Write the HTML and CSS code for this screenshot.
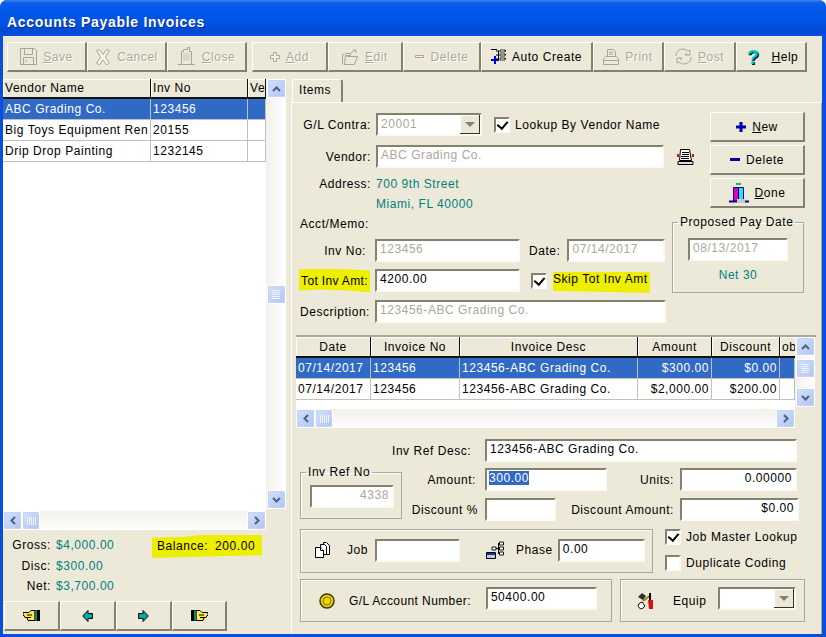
FILE: index.html
```html
<!DOCTYPE html>
<html lang="en">
<head>
  <meta charset="UTF-8">
  <title>Accounts Payable Invoices</title>
  <link rel="stylesheet" href="styles.css">
</head>
<body>
  <svg class="defs" width="0" height="0">
    <symbol id="up" viewBox="0 0 9 6"><path d="M1 5l3.500-3.500L8 5" fill="none" stroke="#4d6185" stroke-width="2"/></symbol>
    <symbol id="down" viewBox="0 0 9 6"><path d="M1 1l3.500 3.500L8 1" fill="none" stroke="#4d6185" stroke-width="2"/></symbol>
    <symbol id="left" viewBox="0 0 6 9"><path d="M5 1L1.500 4.500 5 8" fill="none" stroke="#4d6185" stroke-width="2"/></symbol>
    <symbol id="right" viewBox="0 0 6 9"><path d="M1 1l3.500 3.500L1 8" fill="none" stroke="#4d6185" stroke-width="2"/></symbol>
    <symbol id="grip_h" viewBox="0 0 9 8"><path d="M.5 0v8M2.500 0v8M4.500 0v8M6.500 0v8M8.500 0v8" stroke="#eef3ff"/></symbol>
    <symbol id="grip_v" viewBox="0 0 8 9"><path d="M0 .5h8M0 2.500h8M0 4.500h8M0 6.500h8M0 8.500h8" stroke="#eef3ff"/></symbol>
  </svg>

  <div class="window">
    <div class="title_bar">Accounts Payable Invoices</div>
    <div class="client">
      <!-- toolbar -->
      <div class="toolbar">
        <div class="btn off">
          <svg width="17" height="17" viewBox="0 0 17 17" fill="none" stroke="#a8a596"><path d="M.5.500h14l2 2v14H.500z"/><path d="M4.500.500v6h8v-6M3.500 16.500v-7h10v7M5 13h2"/></svg>
          <span><u>S</u>ave</span>
        </div>
        <div class="btn off">
          <svg width="16" height="16" viewBox="0 0 16 16" fill="#f4f1e6" stroke="#a8a596"><path d="M1.500 1.500l3-1 3.500 5 3.500-5 3 1-4 6.500 4 6-3 2-3.500-5-3.500 5-3-2 4-6z"/></svg>
          <span>Cancel</span>
        </div>
        <div class="btn off">
          <svg width="18" height="19" viewBox="0 0 18 19" fill="none" stroke="#a8a596"><path d="M0 17.500h17"/><path d="M3.500 17V4.500h2V2.500h4v-2h2v4h2V17"/><path d="M5 7h7M5 9h7M5 11h7M5 13h7" stroke="#c8c5b6"/></svg>
          <span><u>C</u>lose</span>
        </div>
        <div></div>
        <div class="btn off">
          <svg width="10" height="10" viewBox="0 0 10 10" fill="#f4f1e6" stroke="#a8a596"><path d="M3.500.500h3v3h3v3h-3v3h-3v-3h-3v-3h3z"/></svg>
          <span><u>A</u>dd</span>
        </div>
        <div class="btn off">
          <svg width="17" height="16" viewBox="0 0 17 16" fill="none" stroke="#a8a596"><path d="M.5 15.500v-10h2l1-1h5v2h-5l-1 9h10l3-8h-11"/><path d="M9 4l4-3m-2 0h3v3"/></svg>
          <span><u>E</u>dit</span>
        </div>
        <div class="btn off">
          <svg width="10" height="4" viewBox="0 0 10 4" fill="#f4f1e6" stroke="#a8a596"><path d="M.5.500h8v2h-8z"/></svg>
          <span>Delete</span>
        </div>
        <div class="btn">
          <svg width="15" height="15" viewBox="0 0 15 15"><path d="M0 .5h6M9 1.500h6M9 5.500h6M9 9.500h6M7.500 2v8M5 2h3M5 6h3M5 10h3" fill="none" stroke="#000"/><path d="M9 1h5v2H9zM9 5h5v2H9zM9 9h5v2H9z" fill="#fff" stroke="#000" stroke-width=".8"/><path d="M3 7h2v3h3v2H5v3H3v-3H0v-2h3z" fill="#0000c8"/></svg>
          <span>Auto Create</span>
        </div>
        <div class="btn off">
          <svg width="16" height="16" viewBox="0 0 16 16" fill="none" stroke="#a8a596"><path d="M4.500 7.500v-7h6l2 2v5M.5 15.500v-6l2-2h11l2 2v6zM.5 11.500h15M6 3h4M6 5h4"/></svg>
          <span>Print</span>
        </div>
        <div class="btn off">
          <svg width="17" height="17" viewBox="0 0 17 17" fill="none" stroke="#a8a596"><path d="M1 8a7 7 0 0 1 12-5l2-1v5h-5l2-2M16 9a7 7 0 0 1-12 5l-2 1v-5h5l-2 2"/></svg>
          <span><u>P</u>ost</span>
        </div>
        <div class="btn">
          <span class="help_mark">?</span>
          <span><u>H</u>elp</span>
        </div>
      </div>

      <div class="main">
        <!-- vendor list -->
        <div class="side">
          <div class="list_box">
            <div class="list_view">
              <table class="grid list_grid">
                <colgroup><col class="c_vendor"><col class="c_inv"><col class="c_ve"></colgroup>
                <tr class="head"><th>Vendor Name</th><th>Inv No</th><th>Ve</th></tr>
                <tr class="sel"><td>ABC Grading Co.</td><td>123456</td><td></td></tr>
                <tr><td>Big Toys Equipment Ren</td><td>20155</td><td></td></tr>
                <tr><td>Drip Drop Painting</td><td>1232145</td><td></td></tr>
              </table>
            </div>
            <div class="vscroll list_v">
              <div class="sb_btn"><svg width="9" height="6"><use href="#up"/></svg></div>
              <div class="track t_list1"></div>
              <div class="sb_btn thumb_v"><svg width="8" height="9"><use href="#grip_v"/></svg></div>
              <div class="track"></div>
              <div class="sb_btn"><svg width="9" height="6"><use href="#down"/></svg></div>
            </div>
            <div class="hscroll">
              <div class="sb_btn"><svg width="6" height="9"><use href="#left"/></svg></div>
              <div class="sb_btn thumb_h"><svg width="9" height="8"><use href="#grip_h"/></svg></div>
              <div class="track"></div>
              <div class="sb_btn"><svg width="6" height="9"><use href="#right"/></svg></div>
            </div>
          </div>

          <div class="summary">
            <div class="totals">
              <span class="tot_label">Gross:</span><span class="teal">$4,000.00</span>
              <span class="tot_label">Disc:</span><span class="teal">$300.00</span>
              <span class="tot_label">Net:</span><span class="teal">$3,700.00</span>
            </div>
            <div class="balance marker"><span>Balance:</span><span>200.00</span></div>
          </div>

          <div class="nav">
            <div class="btn">
              <svg width="17" height="11" viewBox="0 0 17 11"><path d="M0 2.500h6l2-2h4v10H5l-1-3H2l-1-2H0z" fill="#ffe94a" stroke="#000"/><path d="M4 5h5M4 7.500h4" stroke="#000"/><path d="M12 0h2v11h-2z" fill="#00b8c8" stroke="#000" stroke-width=".6"/><path d="M14 0h3v11h-3z"/></svg>
            </div>
            <div class="btn">
              <svg width="11" height="12" viewBox="0 0 11 12"><path d="M6 .5L.7 6 6 11.500V8.500h4.500v-5H6z" fill="#00a8a8" stroke="#000"/></svg>
            </div>
            <div class="btn">
              <svg width="11" height="12" viewBox="0 0 11 12"><path d="M5 .5L10.300 6 5 11.500V8.500H.5v-5H5z" fill="#00a8a8" stroke="#000"/></svg>
            </div>
            <div class="btn">
              <svg width="17" height="11" viewBox="0 0 17 11"><path d="M17 2.500h-6l-2-2H5v10h7l1-3h2l1-2h1z" fill="#ffe94a" stroke="#000"/><path d="M13 5H8M13 7.500H9" stroke="#000"/><path d="M3 0h2v11H3z" fill="#00b8c8" stroke="#000" stroke-width=".6"/><path d="M0 0h3v11H0z"/></svg>
            </div>
          </div>
        </div>

        <!-- items tab -->
        <div class="tab_area">
          <div class="tab">Items</div>
          <div class="panel">
            <div class="upper">
              <div class="upper_form">
                <div class="row">
                  <span class="lbl lbl_top">G/L Contra:</span>
                  <div class="combo combo_contra"><span class="dim">20001</span><div class="combo_arrow"></div></div>
                  <div class="check check_lookup"></div>
                  <span>Lookup By Vendor Name</span>
                </div>
                <div class="row row_vendor">
                  <span class="lbl lbl_top">Vendor:</span>
                  <div class="field f_vendor dim">ABC Grading Co.</div>
                  <svg class="note_icon" width="17" height="18" viewBox="0 0 17 18"><path d="M1 13.500h15v3H1z" fill="#ddd" stroke="#000"/><path d="M3.500 1.500h9l2 11h-12z" fill="#fff" stroke="#000"/><path d="M5 4.500h7M5 6.500h7M4 8.500h8M4 10.500h8" stroke="#000"/><path d="M0 6h2v3H0zM15 6h2v3h-2z" fill="#d01010"/></svg>
                </div>
                <div class="row row_addr">
                  <span class="lbl lbl_top">Address:</span>
                  <span class="teal addr">700 9th Street</span>
                </div>
                <div class="row row_city">
                  <span class="lbl lbl_top"></span>
                  <span class="teal addr">Miami, FL 40000</span>
                </div>
              </div>
              <div class="side_btns">
                <div class="btn">
                  <svg width="10" height="10" viewBox="0 0 10 10"><path d="M3.500 0h3v3.500H10v3H6.500V10h-3V6.500H0v-3h3.500z" fill="#0000a8"/></svg>
                  <span><u>N</u>ew</span>
                </div>
                <div class="btn">
                  <svg width="10" height="3" viewBox="0 0 10 3"><path d="M0 0h10v3H0z" fill="#0000a8"/></svg>
                  <span>Delete</span>
                </div>
                <div class="btn">
                  <svg width="20" height="20" viewBox="0 0 20 20"><path d="M7 0h5v2H7z" fill="#10c040"/><path d="M4.500 4.500h5V18h-5z" fill="#e000c0" stroke="#0000a0"/><path d="M9.500 4.500h5V18h-5z" fill="#30e0f0" stroke="#0000a0"/><path d="M0 17.500h20v2H0z" fill="#0000a0"/><path d="M8 16h8v4H8z" fill="#c8c8c8"/></svg>
                  <span><u>D</u>one</span>
                </div>
              </div>
            </div>

            <div class="lower">
              <div class="lower_form">
                <div class="memo">Acct/Memo:</div>
                <div class="row row_inv">
                  <span class="lbl l_inv">Inv No:</span>
                  <div class="field f_inv dim">123456</div>
                  <span class="date_lbl">Date:</span>
                  <div class="field f_date dim">07/14/2017</div>
                </div>
                <div class="row row_tot">
                  <span class="lbl lbl_low"><span class="marker tot_mark">Tot Inv Amt:</span></span>
                  <div class="field f_inv">4200.00</div>
                  <div class="check check_skip"></div>
                  <span class="marker skip_mark">Skip Tot Inv Amt</span>
                </div>
                <div class="row row_desc">
                  <span class="lbl lbl_low">Description:</span>
                  <div class="field f_desc dim">123456-ABC Grading Co.</div>
                </div>
              </div>
              <fieldset class="group pay_group">
                <legend>Proposed Pay Date</legend>
                <div class="field f_pay dim">08/13/2017</div>
                <div class="teal net">Net 30</div>
              </fieldset>
            </div>

            <!-- invoice lines -->
            <div class="lines">
              <div class="lines_view">
                <table class="grid lines_grid">
                  <colgroup><col class="c_date"><col class="c_no"><col class="c_desc"><col class="c_amt"><col class="c_disc"><col class="c_ob"></colgroup>
                  <tr class="head"><th>Date</th><th>Invoice No</th><th>Invoice Desc</th><th>Amount</th><th>Discount</th><th class="clip">ob</th></tr>
                  <tr class="sel"><td>07/14/2017</td><td>123456</td><td>123456-ABC Grading Co.</td><td class="num">$300.00</td><td class="num">$0.00</td><td></td></tr>
                  <tr><td>07/14/2017</td><td>123456</td><td>123456-ABC Grading Co.</td><td class="num">$2,000.00</td><td class="num">$200.00</td><td></td></tr>
                </table>
              </div>
              <div class="vscroll lines_v">
                <div class="sb_btn"><svg width="9" height="6"><use href="#up"/></svg></div>
                <div class="sb_btn thumb_v2"><svg width="8" height="9"><use href="#grip_v"/></svg></div>
                <div class="track"></div>
                <div class="sb_btn"><svg width="9" height="6"><use href="#down"/></svg></div>
              </div>
              <div class="hscroll">
                <div class="sb_btn"><svg width="6" height="9"><use href="#left"/></svg></div>
                <div class="sb_btn thumb_h"><svg width="9" height="8"><use href="#grip_h"/></svg></div>
                <div class="track"></div>
                <div class="sb_btn"><svg width="6" height="9"><use href="#right"/></svg></div>
              </div>
            </div>

            <div class="ref">
              <fieldset class="group ref_group">
                <legend>Inv Ref No</legend>
                <div class="field f_refno dim num">4338</div>
              </fieldset>
              <div class="ref_form">
                <div class="row">
                  <span class="lbl l_refdesc">Inv Ref Desc:</span>
                  <div class="field f_refdesc">123456-ABC Grading Co.</div>
                </div>
                <div class="row row_amt">
                  <span class="lbl l_amt">Amount:</span>
                  <div class="field f_amt"><span class="picked">300.00</span></div>
                  <span class="lbl l_units">Units:</span>
                  <div class="field f_units num">0.00000</div>
                </div>
                <div class="row row_disc">
                  <span class="lbl l_disc">Discount %</span>
                  <div class="field f_pct"></div>
                  <span class="lbl l_dam">Discount Amount:</span>
                  <div class="field f_dam num">$0.00</div>
                </div>
              </div>
            </div>

            <div class="job_row">
              <div class="box job_box">
                <svg class="ic_job" width="16" height="16" viewBox="0 0 16 16" fill="#fff" stroke="#000"><path d="M8.500.500h3l3 3v9h-5z"/><path d="M5.500 2.500h4l2 2v8h-5z"/><path d="M.5 5.500h5l3 3v7h-8z"/><path d="M5.500 5.500v3h3"/></svg>
                <span class="job_lbl">Job</span>
                <div class="field f_job"></div>
                <svg class="ic_phase" width="18" height="18" viewBox="0 0 18 18"><path d="M9 7.500h3M12.500 2v11M12 2.500h1M12 7.500h1M12 12.500h1" stroke="#000" fill="none"/><path d="M13.500 1h4v3h-4zM13.500 6h4v3h-4zM13.500 11h4v3h-4zM6 6h4v3H6z" fill="#fff" stroke="#000" stroke-width=".9"/><path d="M.5 11.500h9v6h-9z" fill="#c8c8d8" stroke="#000"/><path d="M1 12h8v2H1z" fill="#1030b0"/></svg>
                <span class="phase_lbl">Phase</span>
                <div class="field f_phase">0.00</div>
              </div>
              <div class="job_checks">
                <div class="check_row"><div class="check"></div><span>Job Master Lookup</span></div>
                <div class="check_row"><div class="check blank"></div><span>Duplicate Coding</span></div>
              </div>
            </div>

            <div class="gl_row">
              <div class="box gl_box">
                <svg class="ic_coin" width="16" height="16" viewBox="0 0 16 16"><circle cx="8" cy="8" r="7" fill="#e8d800" stroke="#403800" stroke-width="1.500"/><circle cx="8" cy="8" r="4" fill="none" stroke="#807000"/></svg>
                <span class="gl_lbl">G/L Account Number:</span>
                <div class="field f_gl">50400.00</div>
              </div>
              <div class="box equip_box">
                <svg class="ic_equip" width="17" height="18" viewBox="0 0 17 18"><path d="M6 9l8-6" stroke="#a08000" stroke-width="2"/><path d="M1 5l4-4 4 3-3 4z" fill="#303030"/><path d="M3 11a3 3 0 1 0 4 4l1-1-3-4z" fill="#fff" stroke="#000"/><path d="M11 8h5v9h-4z" fill="#e01010"/><path d="M13 1v7" stroke="#000" stroke-width="2"/></svg>
                <span class="equip_lbl">Equip</span>
                <div class="combo combo_equip"><div class="combo_arrow"></div></div>
              </div>
            </div>
          </div>
        </div>
      </div>
    </div>
  </div>
</body>
</html>
```

FILE: styles.css
```css
* {
  margin: 0;
  padding: 0;
  box-sizing: border-box;
}
body {
  width: 826px;
  height: 637px;
  overflow: hidden;
  background: #fff;
  font-family: "Liberation Sans", Arial, sans-serif;
  font-size: 12px;
  letter-spacing: .55px;
  color: #000;
}
.defs {
  position: absolute;
}
.window {
  display: flex;
  flex-direction: column;
  width: 826px;
  height: 637px;
  background: #0a4fdc;
  border-radius: 7px 7px 0 0;
  overflow: hidden;
}
.title_bar {
  height: 36px;
  padding: 13px 0 0 7px;
  background: linear-gradient(#3b84f0 0, #0a5ce8 3px, #0258ea 10px, #0054e3 22px, #0048d4 32px, #0a50dc 36px);
  color: #fff;
  font-size: 14px;
  font-weight: bold;
  letter-spacing: .7px;
  line-height: 18px;
  text-shadow: 1px 1px 0 #0a2f90;
}
.client {
  flex: 1;
  margin: 0 4px 3px 3px;
  background: #ece9d8;
  min-height: 0;
}

/* raised buttons */
.btn {
  display: flex;
  align-items: center;
  justify-content: center;
  gap: 6px;
  background: #ece9d8;
  border: 1px solid #ece9d8;
  border-top-color: #fff;
  border-left-color: #fff;
  border-right: 2px solid #85816f;
  border-bottom: 2px solid #85816f;
}
.btn.off {
  color: #aca899;
  text-shadow: 1px 1px 0 #fff;
}
.help_mark {
  font-size: 20px;
  font-weight: bold;
  line-height: 20px;
  color: #00c8d8;
  text-shadow: 1px 1px 0 #000;
  margin: 0 6px 0 3px;
}

.toolbar {
  display: grid;
  grid-template-columns: 80px 80px 80px 5px 76px 75px 78px 112px 71px 72px 71px;
  height: 30px;
  margin: 6px 0 7px 4px;
}

.main {
  display: flex;
}

/* left side */
.side {
  width: 283px;
  height: 555px;
}
.list_box {
  display: grid;
  grid-template-columns: 263px 20px;
  grid-template-rows: 432px 19px;
  height: 451px;
}
.list_view {
  grid-column: 1;
  grid-row: 1;
  background: #fff;
  overflow: hidden;
}
.grid {
  border-collapse: separate;
  border-spacing: 0;
  table-layout: fixed;
}
.list_grid {
  width: 263px;
}
.c_vendor { width: 148px; }
.c_inv { width: 97px; }
.c_ve { width: 18px; }
.grid th {
  height: 21px;
  padding: 0 2px;
  background: #ece9d8;
  font-weight: normal;
  text-align: center;
  white-space: nowrap;
  overflow: hidden;
  border-right: 1px solid #111;
  border-bottom: 2px solid #111;
  box-shadow: inset 1px 1px 0 #fff;
}
.list_grid th {
  height: 20px;
  text-align: left;
}
.grid td {
  height: 21px;
  padding: 0 2px;
  white-space: nowrap;
  overflow: hidden;
  border-right: 1px solid #c0c0c0;
  border-bottom: 1px solid #c0c0c0;
}
.grid .sel td {
  background: #316ac5;
  color: #fff;
}
.grid .num {
  text-align: right;
}
.grid .clip {
  text-align: left;
  border-right: 0;
}

/* scrollbars */
.vscroll {
  display: flex;
  flex-direction: column;
  align-items: center;
  background: linear-gradient(90deg, #f3f1ec, #fefefe);
}
.list_v {
  grid-column: 2;
  grid-row: 1;
  height: 430px;
}
.hscroll {
  display: flex;
  align-items: center;
  grid-column: 1;
  grid-row: 2;
  background: linear-gradient(#f3f1ec, #fefefe);
}
.track {
  flex: 1;
}
.t_list1 {
  flex: 0 0 187px;
}
.sb_btn {
  display: flex;
  align-items: center;
  justify-content: center;
  flex: none;
  width: 19px;
  height: 19px;
  background: linear-gradient(135deg, #d4e0fc, #b0c5f5);
  border: 1px solid #fff;
  border-radius: 2px;
  box-shadow: 0 0 0 1px #c5d3f3 inset;
}
.thumb_h {
  width: 18px;
}

/* totals under the list */
.summary {
  display: flex;
  height: 71px;
}
.totals {
  display: grid;
  grid-template-columns: 48px auto;
  grid-auto-rows: 20.500px;
  column-gap: 5px;
  width: 147px;
  padding-top: 5px;
  align-items: center;
  height: 71px;
}
.tot_label {
  text-align: right;
}
.teal {
  color: #008080;
}
.marker {
  background: #eeee00;
}
.balance {
  display: flex;
  gap: 7px;
  width: 110px;
  height: 23px;
  margin: 5px 0 0 2px;
  padding: 1px 0 0 5px;
  line-height: 20px;
  clip-path: polygon(0 12%, 30% 8%, 45% 0, 100% 0, 100% 88%, 60% 92%, 30% 96%, 0 100%);
}
.nav {
  display: grid;
  grid-template-columns: 56px 56px 56px 55px;
  height: 30px;
  margin-left: 1px;
}

/* tab panel */
.tab_area {
  width: 532px;
  margin-left: 5px;
}
.tab {
  width: 51px;
  height: 23px;
  margin-left: 1px;
  padding: 3px 0 0 6px;
  background: #ece9d8;
  border: 1px solid #fff;
  border-bottom: 0;
  border-right: 2px solid #85816f;
  border-radius: 3px 3px 0 0;
}
.panel {
  height: 532px;
  border-top: 1px solid #fff;
  border-left: 1px solid #fff;
  border-right: 1px solid #aca899;
  background: #ece9d8;
}
.row {
  display: flex;
  align-items: center;
  height: 23px;
}
.lbl {
  flex: none;
  text-align: right;
  white-space: nowrap;
}
.lbl_top {
  width: 79px;
  margin-right: 5px;
}
.lbl_low {
  width: 78px;
  margin-right: 5px;
}
.l_inv {
  width: 74px;
  margin-right: 9px;
}
.field {
  flex: none;
  height: 23px;
  padding: 0 0 0 3px;
  line-height: 17px;
  background: #fff;
  border: 2px solid #fbfaf5;
  border-top-color: #85816f;
  border-left-color: #85816f;
  overflow: hidden;
  white-space: nowrap;
}
.field.num {
  text-align: right;
  padding-right: 3px;
}
.dim {
  color: #aca899;
}
.combo {
  display: flex;
  flex: none;
  justify-content: space-between;
  height: 23px;
  padding: 0 0 0 3px;
  line-height: 19px;
  background: #fff;
  border: 2px solid #fbfaf5;
  border-top-color: #85816f;
  border-left-color: #85816f;
}
.combo_arrow {
  position: relative;
  width: 20px;
  height: 19px;
  margin-left: auto;
  background: #ece9d8;
  border-right: 1px solid #333;
  border-bottom: 1px solid #333;
  box-shadow: inset 1px 1px 0 #fff;
}
.combo_arrow::after {
  content: "";
  position: absolute;
  left: 5px;
  top: 7px;
  border: 5px solid transparent;
  border-top: 5px solid #85816f;
  border-bottom: 0;
}
.check {
  position: relative;
  flex: none;
  width: 16px;
  height: 16px;
  background: #fff;
  border: 2px solid #fbfaf5;
  border-top-color: #85816f;
  border-left-color: #85816f;
}
.check:not(.blank)::after {
  content: "";
  position: absolute;
  left: 3px;
  top: 0;
  width: 5px;
  height: 8px;
  border: solid #000;
  border-width: 0 2px 2px 0;
  transform: rotate(40deg);
}
.upper {
  display: flex;
  height: 114px;
}
.upper_form {
  width: 418px;
  padding-top: 10px;
}
.combo_contra {
  width: 106px;
}
.check_lookup {
  margin: 0 5px 0 12px;
}
.row_vendor {
  margin-top: 9px;
}
.f_vendor {
  width: 288px;
}
.note_icon {
  margin-left: 13px;
}
.row_addr {
  height: 20px;
  margin-top: 6px;
}
.row_city {
  height: 20px;
}
.side_btns {
  display: flex;
  flex-direction: column;
  gap: 3px;
  width: 95px;
  padding-top: 9px;
}
.side_btns .btn {
  height: 30px;
  flex: none;
}
.lower {
  display: flex;
  height: 118px;
}
.lower_form {
  width: 380px;
}
.memo {
  height: 14px;
  margin-left: 8px;
  line-height: 14px;
}
.row_inv {
  margin-top: 8px;
}
.f_inv {
  width: 145px;
}
.date_lbl {
  margin: 0 7px 0 9px;
}
.f_date {
  width: 98px;
}
.row_tot {
  margin-top: 7px;
}
.tot_mark {
  display: inline-block;
  margin-left: 7px;
  width: 71px;
  height: 24px;
  line-height: 25px;
  text-align: center;
  letter-spacing: .35px;
  clip-path: polygon(0 4%, 25% 0, 75% 4%, 100% 8%, 100% 100%, 70% 92%, 30% 88%, 0 92%);
}
.check_skip {
  margin: 0 6px 0 11px;
}
.skip_mark {
  height: 21px;
  margin-top: 4px;
  padding: 0 2px 0 0;
  line-height: 14px;
  clip-path: polygon(0 0, 100% 0, 100% 100%, 50% 94%, 0 90%);
}
.row_desc {
  margin-top: 8px;
}
.f_desc {
  width: 291px;
}
.group {
  border: 1px solid #aca899;
  box-shadow: 1px 1px 0 #fff inset;
}
.group legend {
  padding: 0 2px;
  line-height: 14px;
  white-space: nowrap;
}
.pay_group {
  flex: none;
  width: 132px;
  height: 78px;
  margin-top: -2px;
  padding: 9px 0 0 15px;
}
.pay_group legend {
  margin-left: -10px;
}
.f_pay {
  width: 100px;
}
.net {
  width: 100px;
  margin-top: 7px;
  text-align: center;
}

.lines {
  display: grid;
  grid-template-columns: 499px 20px;
  grid-template-rows: 72px 19px;
  width: 520px;
  height: 93px;
  margin-left: 4px;
  border-top: 2px solid #aca899;
}
.lines_view {
  grid-column: 1;
  grid-row: 1;
  background: #fff;
  overflow: hidden;
}
.lines_grid {
  width: 499px;
}
.c_date { width: 75px; }
.c_no { width: 89px; }
.c_desc { width: 178px; }
.c_amt { width: 74px; }
.c_disc { width: 68px; }
.c_ob { width: 15px; }
.lines_v {
  grid-column: 2;
  grid-row: 1;
  height: 70px;
}
.thumb_v2 {
  margin-top: 3px;
}

.ref {
  display: flex;
  height: 101px;
  padding-left: 8px;
}
.ref_group {
  flex: none;
  width: 102px;
  height: 54px;
  margin-top: 37px;
  padding: 6px 0 0 9px;
}
.ref_group legend {
  margin-left: -4px;
}
.f_refno {
  width: 84px;
}
.ref_form {
  padding-top: 11px;
  width: 395px;
}
.l_refdesc {
  width: 78px;
  margin: 0 15px 0 -10px;
}
.f_refdesc {
  width: 312px;
}
.row_amt {
  margin-top: 6px;
}
.l_amt {
  width: 74px;
  margin-right: 9px;
}
.f_amt {
  width: 122px;
  padding-left: 2px;
}
.picked {
  background: #316ac5;
  color: #fff;
}
.l_units {
  margin-left: auto;
  margin-right: 6px;
}
.f_units {
  width: 117px;
}
.row_disc {
  margin-top: 7px;
}
.l_disc {
  width: 76px;
  margin-right: 7px;
}
.f_pct {
  width: 71px;
}
.l_dam {
  margin-left: auto;
  margin-right: 6px;
}
.f_dam {
  width: 119px;
  margin-right: -2px;
}

.box {
  display: flex;
  align-items: center;
  border: 1px solid #aca899;
  box-shadow: 1px 1px 0 #fff inset;
}
.job_row {
  display: flex;
  height: 44px;
  padding-left: 8px;
}
.job_box {
  width: 353px;
  padding-bottom: 2px;
}
.ic_job {
  margin-left: 14px;
}
.job_lbl {
  margin: 0 7px 0 16px;
}
.f_job {
  width: 85px;
}
.ic_phase {
  margin-left: 26px;
}
.phase_lbl {
  margin: 0 5px 0 12px;
}
.f_phase {
  width: 87px;
}
.job_checks {
  margin-left: 12px;
}
.check_row {
  display: flex;
  align-items: center;
  gap: 5px;
  height: 16px;
  margin-bottom: 10px;
}
.gl_row {
  display: flex;
  gap: 8px;
  height: 43px;
  margin-top: 6px;
  padding-left: 8px;
}
.gl_box {
  width: 312px;
}
.ic_coin {
  margin-left: 18px;
}
.gl_lbl {
  margin: 0 15px 0 14px;
  letter-spacing: .4px;
}
.f_gl {
  width: 111px;
  margin-bottom: 4px;
}
.equip_box {
  width: 185px;
}
.ic_equip {
  margin-left: 16px;
}
.equip_lbl {
  margin: 0 12px 0 19px;
}
.combo_equip {
  width: 78px;
  margin-bottom: 4px;
}
```
